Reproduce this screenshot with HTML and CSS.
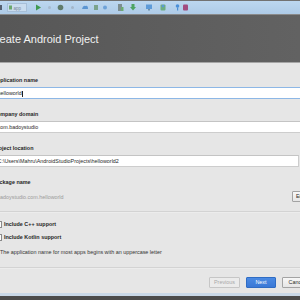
FILE: index.html
```html
<!DOCTYPE html>
<html>
<head>
<meta charset="utf-8">
<link rel="stylesheet" href="styles.css">
</head>
<body>
<div class="window">
  <div class="toolbar">
    <svg class="toolbar-icons" width="300" height="13" viewBox="0 0 300 13">
      <rect x="0" y="4" width="2" height="5" fill="#556070"/>
      <rect x="7.5" y="2.5" width="19" height="8" fill="#c9dcef" stroke="#a7bfd8"/>
      <rect x="9" y="4.5" width="3" height="4" fill="#6aa86e"/>
      <text x="13.5" y="8.5" font-size="4.5" fill="#7a8a9a" font-family="Liberation Sans, sans-serif">app</text>
      <polygon points="36,3.5 36,9.5 41,6.5" fill="#3f9a50"/>
      <circle cx="49.5" cy="6.5" r="1.5" fill="#a6bace"/>
      <circle cx="60.5" cy="6.5" r="2.8" fill="#607c6c"/>
      <circle cx="72.5" cy="6.5" r="1.5" fill="#a3b6c9"/>
      <path d="M82 8 q1 -4 3.5 -3 q2.5 -1 2.5 3 z" fill="#5b95d2"/>
      <rect x="94" y="4" width="4" height="5" fill="#7ba38c"/>
      <circle cx="105" cy="6.5" r="2" fill="#6ea2d8"/>
      <rect x="118" y="3" width="4" height="7" fill="#7e8e90"/>
      <rect x="121" y="6" width="2.5" height="4" fill="#6cab72"/>
      <path d="M131.5 3 h3 v3 h1.5 l-3 3.5 l-3 -3.5 h1.5 z" fill="#4ea463"/>
      <rect x="146" y="3.5" width="6" height="4.5" fill="#5e9bd8"/>
      <rect x="148" y="8" width="2" height="1.5" fill="#6f8fa8"/>
      <rect x="160.5" y="3.5" width="5" height="6" rx="1" fill="#6eae82"/>
      <circle cx="163" cy="5" r="1.3" fill="#5a9ad6"/>
      <circle cx="177.5" cy="5" r="1.8" fill="#4b90d8"/>
      <rect x="177" y="6.5" width="1.2" height="3" fill="#4b90d8"/>
      <rect x="183" y="3.5" width="5" height="6" rx="1" fill="#a24c80"/>
    </svg>
  </div>
  <div class="header">
    <h1 class="title">Create Android Project</h1>
  </div>
  <div class="content">
    <div class="form">
      <div class="field">
        <div class="label">Application name</div>
        <div class="input focused">helloworld<span class="caret"></span></div>
      </div>
      <div class="field">
        <div class="label">Company domain</div>
        <div class="input">com.badoystudio</div>
      </div>
      <div class="field">
        <div class="label">Project location</div>
        <div class="input-row">
          <div class="input">C:\Users\Mahru\AndroidStudioProjects\helloworld2</div>
          <div class="browse">...</div>
        </div>
      </div>
      <div class="field package">
        <div class="label">Package name</div>
        <div class="package-row">
          <span class="package-text">badoystudio.com.helloworld</span>
          <span class="btn edit">Edit</span>
        </div>
      </div>
    </div>
    <div class="separator sep-top"></div>
    <div class="options">
      <div class="check"><span class="box"></span><span>Include C++ support</span></div>
      <div class="check"><span class="box"></span><span>Include Kotlin support</span></div>
      <div class="hint">The application name for most apps begins with an uppercase letter</div>
    </div>
    <div class="separator sep-bottom"></div>
    <div class="buttons">
      <span class="btn prev">Previous</span>
      <span class="btn next">Next</span>
      <span class="btn cancel">Cancel</span>
    </div>
  </div>
  <div class="frame-bottom"></div>
</div>
</body>
</html>
```

FILE: styles.css
```css
html, body {
  margin: 0;
  padding: 0;
  width: 300px;
  height: 300px;
  overflow: hidden;
  background: #e6e6e6;
}

.window {
  width: 300px;
  height: 300px;
  overflow: hidden;
  display: flex;
  flex-direction: column;
  font-family: "Liberation Sans", Arial, sans-serif;
}

.toolbar {
  height: 13px;
  border-top: 1px solid #727272;
  border-bottom: 1px solid #8a8a8a;
  background: linear-gradient(#bcd7f0, #aecbe7);
  flex: none;
}

.toolbar-icons {
  display: block;
}

.header {
  height: 47px;
  flex: none;
  background: linear-gradient(90deg, #575757, #626262);
  border-bottom: 1px solid #a6a6a6;
  display: flex;
  align-items: center;
}

.title {
  margin: 1px 0 0 -12px;
  font-size: 11px;
  font-weight: normal;
  color: #f1f1f1;
  white-space: nowrap;
}

.content {
  flex: 1;
  background: #e6e6e6;
  padding-top: 14px;
  display: flex;
  flex-direction: column;
}

.form {
  margin-left: -7px;
  width: 319px;
  display: flex;
  flex-direction: column;
  gap: 12px;
}

.field {
  display: flex;
  flex-direction: column;
  gap: 3px;
}

.label {
  font-size: 5.4px;
  line-height: 7px;
  height: 7px;
  font-weight: bold;
  color: #262626;
  white-space: nowrap;
}

.input {
  height: 10px;
  line-height: 10px;
  border: 1px solid #cdcdcd;
  border-top-color: #c4c4c4;
  background: #ffffff;
  font-size: 5.4px;
  color: #2a2a2a;
  padding-left: 3.5px;
  white-space: nowrap;
  overflow: hidden;
}

.input.focused {
  border-color: #8db7e6;
}

.caret {
  display: inline-block;
  width: 0.6px;
  height: 6px;
  background: #222;
  vertical-align: middle;
  margin-left: 0.5px;
}

.input-row {
  display: flex;
  gap: 3px;
}

.input-row .input {
  flex: 1;
}

.browse {
  width: 8px;
  height: 10px;
  border: 1px solid #a0a0a0;
  background: #eeeeee;
  font-size: 5.4px;
  line-height: 10px;
  text-align: center;
  overflow: hidden;
}

.package {
  gap: 5px;
}

.package-row {
  display: flex;
  justify-content: space-between;
  align-items: center;
  height: 11px;
  padding-left: 4px;
}

.package-text {
  font-size: 5.4px;
  color: #9b9b9b;
  white-space: nowrap;
}

.btn {
  box-sizing: border-box;
  height: 11px;
  font-size: 5.4px;
  line-height: 9px;
  text-align: center;
  border: 1px solid #a3a3a3;
  border-radius: 1px;
  background: linear-gradient(#f7f7f7, #e6e6e6);
  color: #2a2a2a;
  white-space: nowrap;
  overflow: hidden;
}

.edit {
  width: 20px;
  padding-left: 3px;
  text-align: left;
}

.separator {
  height: 1px;
  background: #d3d3d3;
  border-bottom: 1px solid #ececec;
  flex: none;
}

.sep-top {
  margin-top: 9px;
}

.options {
  padding-top: 7px;
  display: flex;
  flex-direction: column;
}

.check {
  display: flex;
  align-items: center;
  gap: 2px;
  height: 8px;
  margin-left: -5px;
  font-size: 5.4px;
  font-weight: bold;
  color: #262626;
  white-space: nowrap;
}

.check + .check {
  margin-top: 5px;
}

.box {
  width: 5px;
  height: 5px;
  border: 1px solid #8a8a8a;
  background: #fbfbfb;
  flex: none;
}

.hint {
  margin-top: 8px;
  height: 7px;
  line-height: 7px;
  font-size: 5.4px;
  color: #333333;
  white-space: nowrap;
}

.sep-bottom {
  margin-top: 11px;
}

.buttons {
  margin-top: 8px;
  width: 312px;
  display: flex;
  justify-content: flex-end;
  gap: 6px;
}

.prev {
  width: 31px;
  color: #a9a9a9;
  border-color: #c6c6c6;
  background: #ebebeb;
}

.next {
  width: 30px;
  color: #ffffff;
  border-color: #2f6cc4;
  background: linear-gradient(#4a8ae3, #3a78d6);
}

.cancel {
  width: 30px;
}

.frame-bottom {
  flex: none;
  height: 7px;
  border-top: 3px solid #c9d8e8;
  box-sizing: border-box;
  background: #4c4c4c;
}
```
